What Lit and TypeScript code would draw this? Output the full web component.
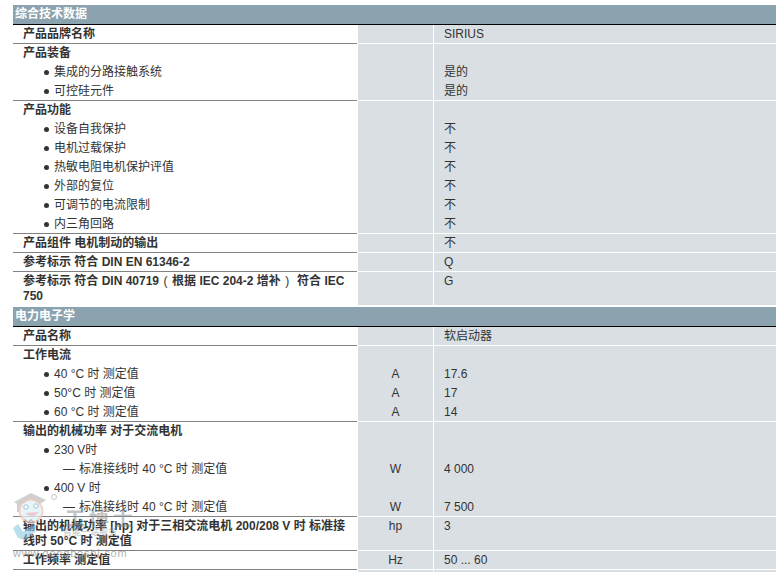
import { LitElement, html, css } from "lit";
import { customElement } from "lit/decorators.js";

type Line = { t: unknown; k?: "title" | "bullet" | "dash" | "blank"; u?: string; v?: string };
type Row = { lines: Line[]; wrap?: boolean; last?: boolean };
type Section = { title: string; rows: Row[] };

const no = (t: string): Line => ({ t, k: "bullet", v: "不" });

const din = html`参考标示 符合 DIN 40719<span class="paren">(</span>根据 IEC 204-2 增补<span class="paren">)</span> 符合 IEC 750`;

const sections: Section[] = [
  {
    title: "综合技术数据",
    rows: [
      { lines: [{ t: "产品品牌名称", k: "title", v: "SIRIUS" }] },
      {
        lines: [
          { t: "产品装备", k: "title" },
          { t: "集成的分路接触系统", k: "bullet", v: "是的" },
          { t: "可控硅元件", k: "bullet", v: "是的" },
        ],
      },
      {
        lines: [
          { t: "产品功能", k: "title" },
          no("设备自我保护"),
          no("电机过载保护"),
          no("热敏电阻电机保护评值"),
          no("外部的复位"),
          no("可调节的电流限制"),
          no("内三角回路"),
        ],
      },
      { lines: [{ t: "产品组件 电机制动的输出", k: "title", v: "不" }] },
      { lines: [{ t: "参考标示 符合 DIN EN 61346-2", k: "title", v: "Q" }] },
      { wrap: true, last: true, lines: [{ t: din, k: "title", v: "G" }] },
    ],
  },
  {
    title: "电力电子学",
    rows: [
      { lines: [{ t: "产品名称", k: "title", v: "软启动器" }] },
      {
        lines: [
          { t: "工作电流", k: "title" },
          { t: "40 °C 时 测定值", k: "bullet", u: "A", v: "17.6" },
          { t: "50°C 时 测定值", k: "bullet", u: "A", v: "17" },
          { t: "60 °C 时 测定值", k: "bullet", u: "A", v: "14" },
        ],
      },
      {
        lines: [
          { t: "输出的机械功率 对于交流电机", k: "title" },
          { t: "230 V时", k: "bullet" },
          { t: "标准接线时 40 °C 时 测定值", k: "dash", u: "W", v: "4 000" },
          { t: "400 V 时", k: "bullet" },
          { t: "标准接线时 40 °C 时 测定值", k: "dash", u: "W", v: "7 500" },
        ],
      },
      {
        wrap: true,
        lines: [
          {
            t: "输出的机械功率 [hp] 对于三相交流电机 200/208 V 时 标准接线时 50°C 时 测定值",
            k: "title",
            u: "hp",
            v: "3",
          },
        ],
      },
      { lines: [{ t: "工作频率 测定值", k: "title", u: "Hz", v: "50 ... 60" }] },
      { last: true, lines: [{ t: "", k: "blank" }] },
    ],
  },
];

@customElement("app-root")
export class AppRoot extends LitElement {
  static styles = css`
    :host {
      display: block;
      position: relative;
      width: 782px;
      height: 572px;
      overflow: hidden;
      background: #fff;
      font-family: "Liberation Sans", "Noto Sans CJK SC", sans-serif;
      font-size: 12px;
      color: #333;
    }
    .page {
      padding: 5px 6px 0 13px;
    }
    .section + .section {
      margin-top: 1px;
    }
    .head {
      height: 19px;
      line-height: 19px;
      padding-left: 2px;
      background: #8ba3ae;
      border-bottom: 1px solid #000;
      color: #fff;
      font-weight: 700;
    }
    .row {
      display: grid;
      grid-template-columns: 344px 75px 342px;
      column-gap: 1px;
    }
    .cell {
      border-bottom: 1px solid #fff;
    }
    .name {
      border-bottom-color: #828282;
    }
    .row.last .name {
      border-bottom-color: #fff;
    }
    .unit,
    .value {
      background: #dadfe3;
    }
    .line {
      height: 19px;
      line-height: 19px;
      white-space: nowrap;
    }
    .line:last-child {
      height: 18px;
    }
    .unit .line {
      text-align: center;
    }
    .value .line {
      padding-left: 10px;
    }
    .title {
      padding-left: 10px;
      font-weight: 700;
    }
    .bullet {
      padding-left: 31px;
      display: flex;
      align-items: center;
      gap: 5px;
    }
    .bullet::before {
      content: "";
      width: 5px;
      height: 5px;
      border-radius: 50%;
      background: #333;
    }
    .dash {
      padding-left: 50px;
      display: flex;
      gap: 4px;
    }
    .wrapped {
      white-space: normal;
      height: auto;
      line-height: 15px;
      padding: 2px 8px 1px 10px;
      font-weight: 700;
    }
    .wrapped:last-child {
      height: auto;
    }
    .paren {
      display: inline-block;
      width: 13px;
      text-align: center;
      font-weight: 400;
    }
    .wrap .unit .line,
    .wrap .value .line {
      line-height: 15px;
      padding-top: 2px;
    }
    .mark {
      position: absolute;
      left: 10px;
      top: 490px;
      width: 135px;
      height: 70px;
      pointer-events: none;
    }
    .mark-big {
      font-size: 20px;
      font-weight: 700;
      fill: #888;
      opacity: 0.5;
      letter-spacing: 4px;
    }
    .mark-cn {
      font-size: 9px;
      fill: #999;
      opacity: 0.6;
    }
    .mark-url {
      font-size: 11px;
      fill: #999;
      opacity: 0.75;
      letter-spacing: 0.8px;
    }
  `;

  private renderLine(l: Line, wrap: boolean) {
    if (wrap) return html`<div class="line wrapped">${l.t}</div>`;
    const cls = `line ${l.k ?? ""}`;
    return html`<div class=${cls}>${l.k === "dash" ? html`<span>—</span>` : ""}<span>${l.t}</span></div>`;
  }

  render() {
    return html`
      <div class="page">
        ${sections.map(
          (s) => html`
            <div class="section">
              <div class="head">${s.title}</div>
              ${s.rows.map(
                (r) => html`
                  <div class="row ${r.wrap ? "wrap" : ""} ${r.last ? "last" : ""}">
                    <div class="cell name">${r.lines.map((l) => this.renderLine(l, !!r.wrap))}</div>
                    <div class="cell unit">${r.lines.map((l) => html`<div class="line">${l.u ?? ""}</div>`)}</div>
                    <div class="cell value">${r.lines.map((l) => html`<div class="line">${l.v ?? ""}</div>`)}</div>
                  </div>
                `
              )}
            </div>
          `
        )}
      </div>
      <svg class="mark" viewBox="0 0 135 70" aria-hidden="true">
        <path d="M4 12 L21 3 L36 10 L30 14 L20 9 L10 15 L9 22 L7 22 L7 14 Z" fill="#a9a9a9" opacity=".55" />
        <circle cx="21" cy="21" r="11.5" fill="#dff1f7" opacity=".75" stroke="#f3c4bb" stroke-width="2" />
        <circle cx="16" cy="17" r="2.2" fill="#fff" stroke="#9cc3d2" />
        <circle cx="26" cy="16" r="2.2" fill="#fff" stroke="#9cc3d2" />
        <path d="M15 23 Q22 30 29 22 Z" fill="#f3bfc9" opacity=".85" />
        <circle cx="44" cy="7" r="2.5" fill="none" stroke="#c9c9c9" />
        <path d="M3 38 L8 34 L13 42 L19 37 L26 35 L25 42 L15 50 L8 48 Z" fill="#7fc2e0" opacity=".55" />
        <text class="mark-big" x="55" y="36">工博士</text>
        <text class="mark-cn" x="53" y="45">智能一站服务</text>
        <text class="mark-url" x="3" y="67">www.gongboshi.com</text>
      </svg>
    `;
  }
}
